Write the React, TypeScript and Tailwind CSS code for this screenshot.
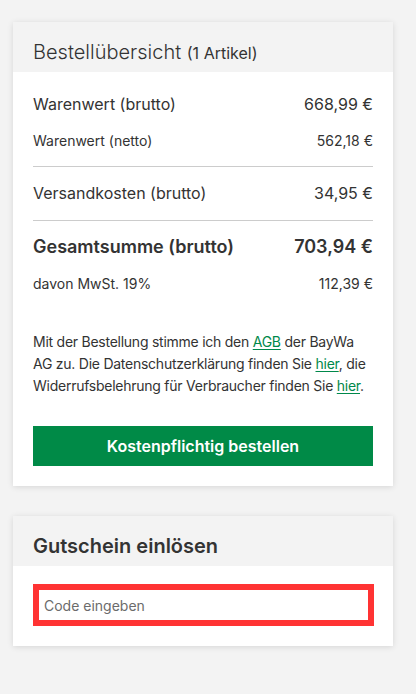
import React from "react";

const rows = {
  brutto: "668,99 €",
  netto: "562,18 €",
  versand: "34,95 €",
  gesamt: "703,94 €",
  mwst: "112,39 €",
};

export default function App() {
  return (
    <div
      className="min-h-[694px] bg-[#f3f3f3] pt-[22px] pb-[48px] text-[#333333]"
      style={{ fontFamily: "Inter, 'Noto Sans', sans-serif" }}
    >
      {/* Bestellübersicht */}
      <div className="ml-[13px] w-[380px] bg-white shadow-[0_1px_6px_rgba(0,0,0,0.12)]">
        <div className="h-[50px] bg-[#f3f3f3] px-5 pt-[16px]">
          <h2 className="text-[20px] leading-[28px] font-light">
            Bestellübersicht <span className="text-[16px] font-normal">(1 Artikel)</span>
          </h2>
        </div>

        <div className="px-5 pt-[20px] pb-[20px]">
          <div className="flex items-center justify-between text-[16px] leading-[24px]">
            <span>Warenwert (brutto)</span>
            <span>{rows.brutto}</span>
          </div>
          <div className="mt-[15px] flex items-center justify-between text-[14px] leading-[20px]">
            <span>Warenwert (netto)</span>
            <span>{rows.netto}</span>
          </div>

          <div className="mt-[15px] h-px bg-[#cccccc]" />

          <div className="mt-[14px] flex items-center justify-between text-[16px] leading-[24px]">
            <span>Versandkosten (brutto)</span>
            <span>{rows.versand}</span>
          </div>

          <div className="mt-[15px] h-px bg-[#cccccc]" />

          <div className="mt-[12px] flex items-center justify-between text-[18px] leading-[28px] font-semibold">
            <span>Gesamtsumme (brutto)</span>
            <span>{rows.gesamt}</span>
          </div>
          <div className="mt-[13px] flex items-center justify-between text-[14px] leading-[20px]">
            <span>davon MwSt. 19%</span>
            <span>{rows.mwst}</span>
          </div>

          <p className="mt-[37px] whitespace-nowrap text-[14px] leading-[22px] tracking-[-0.25px]">
            Mit der Bestellung stimme ich den{" "}
            <a href="#" className="text-[#00884a] underline underline-offset-2">AGB</a> der BayWa
            <br />
            AG zu. Die Datenschutzerklärung finden Sie{" "}
            <a href="#" className="text-[#00884a] underline underline-offset-2">hier</a>, die
            <br />
            Widerrufsbelehrung für Verbraucher finden Sie{" "}
            <a href="#" className="text-[#00884a] underline underline-offset-2">hier</a>.
          </p>

          <button className="mt-[29px] flex h-[40px] w-full items-center justify-center bg-[#008a47] text-[16px] font-semibold text-white">
            Kostenpflichtig bestellen
          </button>
        </div>
      </div>

      {/* Gutschein */}
      <div className="mt-[30px] ml-[13px] w-[380px] bg-white shadow-[0_1px_6px_rgba(0,0,0,0.12)]">
        <div className="h-[50px] bg-[#f3f3f3] px-5 pt-[16px]">
          <h2 className="text-[20px] leading-[28px] font-semibold">Gutschein einlösen</h2>
        </div>
        <div className="px-5 pt-[18px] pb-[20px]">
          <input
            type="text"
            placeholder="Code eingeben"
            className="block h-[42px] w-[341px] border-[6px] border-[#ff3333] bg-white px-[5px] text-[14px] text-[#333] placeholder:text-[#6b6b6b] outline-none"
          />
        </div>
      </div>
    </div>
  );
}
